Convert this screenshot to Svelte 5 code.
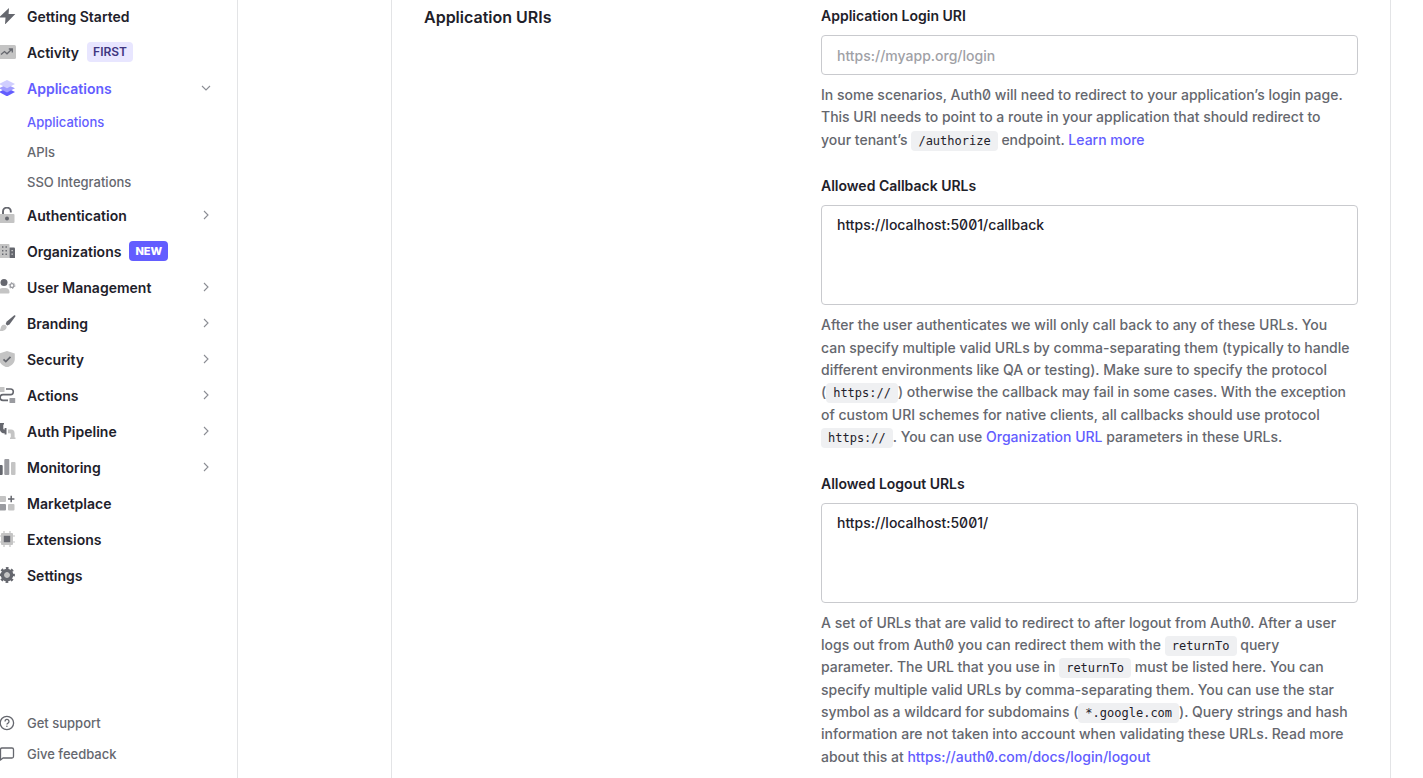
<script>
  const items = [
    { name: 'Getting Started', icon: 'bolt' },
    { name: 'Activity', icon: 'activity', badge: 'FIRST', tone: 'soft' },
    { name: 'Applications', icon: 'stack', open: true, children: ['Applications', 'APIs', 'SSO Integrations'] },
    { name: 'Authentication', icon: 'lock', more: true },
    { name: 'Organizations', icon: 'building', badge: 'NEW', tone: 'solid' },
    { name: 'User Management', icon: 'user', more: true },
    { name: 'Branding', icon: 'brush', more: true },
    { name: 'Security', icon: 'shield', more: true },
    { name: 'Actions', icon: 'flow', more: true },
    { name: 'Auth Pipeline', icon: 'pipe', more: true },
    { name: 'Monitoring', icon: 'bars', more: true },
    { name: 'Marketplace', icon: 'market' },
    { name: 'Extensions', icon: 'chip' },
    { name: 'Settings', icon: 'gear' }
  ];
  let loginUri = $state('');
  let callbacks = $state('https://localhost:5001/callback');
  let logouts = $state('https://localhost:5001/');
</script>

{#snippet glyph(name)}
  <svg class="icon" viewBox="0 0 16 16" width="16" height="16" aria-hidden="true">
    {#if name === 'bolt'}
      <path fill="#65676e" d="M9 0 -1 9.500H5.500L5 16.500 15.300 6H8.600Z" />
    {:else if name === 'activity'}
      <rect x="-3" y="1" width="19" height="14" rx="1.500" fill="#c4c4c4" />
      <path d="M1 10.500 4.500 7.500 7 9.800 11.500 5.500M8.800 5H12.300V8.500" fill="none" stroke="#65676e" stroke-width="1.300" />
    {:else if name === 'stack'}
      <path fill="#635dff" d="M-1 12 7 8l8 4-8 4.300Z" />
      <path fill="#a19dff" d="M-1 8.300 7 4.500l8 3.800-8 4.200Z" />
      <path fill="#d0ceff" d="M-1 4 7 0l8 4-8 4.200Z" />
    {:else if name === 'lock'}
      <rect x="-1" y="7" width="15.500" height="9" rx="1" fill="#c4c4c4" />
      <path d="M3 7V4.500a3.900 3.900 0 0 1 7.800 0V5.500" fill="none" stroke="#65676e" stroke-width="1.900" />
      <circle cx="7" cy="11.500" r="2" fill="#65676e" />
    {:else if name === 'building'}
      <rect x="-1" y="1" width="10.500" height="14" rx="1" fill="#c4c4c4" />
      <path d="M9.500 4.500H14a1 1 0 0 1 1 1V15H9.500Z" fill="#65676e" />
      <path d="M2 3.300h1.400v1.400H2zM5.500 3.300h1.400v1.400H5.500zM2 7h1.400v1.400H2zM5.500 7h1.400v1.400H5.500zM2 10.500h1.400v1.400H2zM5.500 10.500h1.400v1.400H5.500z" fill="#65676e" />
      <path d="M11.500 7h1.300v1.300h-1.300zM11.500 10.500h1.300v1.300h-1.300z" fill="#d8d8d8" />
    {:else if name === 'user'}
      <circle cx="4" cy="3.500" r="3.500" fill="#65676e" />
      <path d="M-2 14.500v-1a4.500 4.500 0 0 1 4.500-4.500h3A4 4 0 0 1 9.500 13.500a1 1 0 0 1-1 1Z" fill="#c4c4c4" />
      <circle cx="12" cy="6.500" r="1.900" fill="none" stroke="#9a9ba0" stroke-width="1.300" />
      <circle cx="12" cy="6.500" r="2.900" fill="none" stroke="#9a9ba0" stroke-width="1" stroke-dasharray="1.400 1.630" />
    {:else if name === 'brush'}
      <path d="M14.300.3c.8-.4 1.400.1 1 1.100L9.500 9.600 7.300 10.500 5.700 9 6.500 6.800Z" fill="#65676e" />
      <path d="M3.500 9.800c2.100-.5 3.700 1.200 3 3.200C5.500 15.700 2 16.600-1 16c1.700-1.300 1.400-2.300 2-3.900.4-1.200 1.300-2.100 2.500-2.300Z" fill="#c4c4c4" />
    {:else if name === 'shield'}
      <path d="M7 0 14.800 2.600V8c0 4-3.400 6.900-7.800 8.500C2.600 14.900-.8 12-.8 8V2.600Z" fill="#c4c4c4" />
      <path d="m3.500 8.300 2.300 2.300 4.700-4.800" fill="none" stroke="#65676e" stroke-width="1.700" />
    {:else if name === 'flow'}
      <rect x="-1" y="0" width="5.500" height="5" rx=".5" fill="#c4c4c4" />
      <rect x="9.500" y="11" width="5.700" height="5" rx=".5" fill="#9a9ba0" />
      <path d="M6 2h4.500a2.800 2.800 0 0 1 0 5.600H3a2.800 2.800 0 0 0 0 5.800h5" fill="none" stroke="#65676e" stroke-width="1.600" />
    {:else if name === 'pipe'}
      <path d="M-1 0H4V1.500H3.300V5c0 1 .4 1.500 1.300 1.500V5H6.500V11.500H4.600V10.300C1.500 10.300-.2 8.500-.2 5.500V1.500H-1Z" fill="#65676e" />
      <path d="M8 6.500h3c2.500 0 3.600 1.600 3.600 4v4h.9V16H10v-1.500h.8v-3c0-.8-.3-1.200-1.100-1.200H8Z" fill="#c4c4c4" />
    {:else if name === 'bars'}
      <rect x="-2" y="6" width="4.700" height="10" rx="1" fill="#65676e" />
      <rect x="4.300" y="0" width="5" height="16" rx="1" fill="#9a9ba0" />
      <rect x="11" y="3" width="4.500" height="13" rx="1" fill="#c4c4c4" />
    {:else if name === 'market'}
      <rect x="-1" y="1" width="7" height="6" rx="1" fill="#c4c4c4" />
      <rect x="-1" y="9" width="7" height="6.500" rx="1" fill="#9a9ba0" />
      <rect x="8" y="9" width="6.500" height="6.500" rx="1" fill="#c4c4c4" />
      <path d="M11.200.8v6.400M8 4h6.400" stroke="#65676e" stroke-width="1.500" />
    {:else if name === 'chip'}
      <path d="M4 0V16M10 0V16M-1 5H15M-1 11H15" stroke="#c4c4c4" stroke-width="1.200" />
      <rect x="1" y="2" width="12" height="12" rx="1" fill="#c4c4c4" />
      <rect x="3.800" y="4.800" width="6.400" height="6.400" fill="#65676e" />
    {:else if name === 'gear'}
      <circle cx="7" cy="8" r="4.400" fill="none" stroke="#65676e" stroke-width="3.800" />
      <circle cx="7" cy="8" r="6.800" fill="none" stroke="#65676e" stroke-width="2.200" stroke-dasharray="2.700 2.640" stroke-dashoffset="1.350" />
      <circle cx="7" cy="8" r="2.700" fill="#c4c4c4" />
    {:else if name === 'help'}
      <circle cx="6.900" cy="8" r="6.700" fill="none" stroke="#65676e" stroke-width="1.300" />
      <path d="M5 6.400a2 2 0 1 1 3 1.700c-.8.400-1.100.8-1.100 1.500" fill="none" stroke="#65676e" stroke-width="1.300" />
      <circle cx="6.900" cy="11.300" r=".8" fill="#65676e" />
    {:else if name === 'chat'}
      <path d="M.5 14V3.500A1.500 1.500 0 0 1 2 2h10a1.500 1.500 0 0 1 1.500 1.500v7A1.500 1.500 0 0 1 12 12H3Z" fill="none" stroke="#65676e" stroke-width="1.300" stroke-linejoin="round" />
    {/if}
  </svg>
{/snippet}

<div class="page">
  <aside>
    <nav aria-label="Main">
      {#each items as item}
        <a class="item" class:active={item.open} href="#top">
          {@render glyph(item.icon)}
          <span>{item.name}</span>
          {#if item.badge}<span class="badge {item.tone}">{item.badge}</span>{/if}
          {#if item.more || item.open}
            <svg class="chevron" viewBox="0 0 12 12" width="12" height="12" aria-hidden="true">
              <path d={item.open ? 'M2 4 6 8 10 4' : 'M4 2 8 6 4 10'} fill="none" stroke="#8b8d94" stroke-width="1.100" />
            </svg>
          {/if}
        </a>
        {#if item.children}
          <div class="sub">
            {#each item.children as child, i}
              <a href="#top" class:active={i === 0}>{child}</a>
            {/each}
          </div>
        {/if}
      {/each}
    </nav>
    <div class="help">
      <a href="#top">{@render glyph('help')}<span>Get support</span></a>
      <a href="#top">{@render glyph('chat')}<span>Give feedback</span></a>
    </div>
  </aside>

  <main>
    <section>
      <h2>Application URIs</h2>
      <form>
        <div class="field">
          <label for="login">Application Login URI</label>
          <input id="login" type="text" placeholder="https://myapp.org/login" bind:value={loginUri} />
          <p>In some scenarios, Auth0 will need to redirect to your application’s login page. This URI needs to point to a route in your application that should redirect to your tenant’s <code>/authorize</code> endpoint. <a href="#top">Learn more</a></p>
        </div>
        <div class="field">
          <label for="callbacks">Allowed Callback URLs</label>
          <textarea id="callbacks" spellcheck="false" bind:value={callbacks}></textarea>
          <p>After the user authenticates we will only call back to any of these URLs. You can specify multiple valid URLs by comma-separating them (typically to handle different environments like QA or testing). Make sure to specify the protocol (<code>https://</code>) otherwise the callback may fail in some cases. With the exception of custom URI schemes for native clients, all callbacks should use protocol <code>https://</code>. You can use <a href="#top">Organization URL</a> parameters in these URLs.</p>
        </div>
        <div class="field">
          <label for="logouts">Allowed Logout URLs</label>
          <textarea id="logouts" spellcheck="false" bind:value={logouts}></textarea>
          <p>A set of URLs that are valid to redirect to after logout from Auth0. After a user logs out from Auth0 you can redirect them with the <code>returnTo</code> query parameter. The URL that you use in <code>returnTo</code> must be listed here. You can specify multiple valid URLs by comma-separating them. You can use the star symbol as a wildcard for subdomains (<code>*.google.com</code>). Query strings and hash information are not taken into account when validating these URLs. Read more about this at <a href="#top">https://auth0.com/docs/login/logout</a></p>
        </div>
      </form>
    </section>
  </main>
</div>

<style>
  :global(body) {
    background: #fff;
  }
  .page {
    display: flex;
    min-height: 100vh;
    box-sizing: border-box;
    font-family: Inter, sans-serif;
    font-size: 14px;
    font-weight: 500;
    font-feature-settings: 'zero';
    color: #1e212a;
  }
  a {
    color: #635dff;
    text-decoration: none;
  }
  aside {
    display: flex;
    flex-direction: column;
    flex: 0 0 238px;
    box-sizing: border-box;
    border-right: 1px solid #e3e4e6;
    padding-bottom: 9px;
  }
  .item {
    display: flex;
    align-items: center;
    height: 36px;
    padding-right: 25px;
    color: #1e212a;
    font-weight: 600;
  }
  .item:first-child {
    height: 32px;
    margin-bottom: 2px;
  }
  .icon {
    flex: none;
    margin-right: 11px;
  }
  .chevron {
    margin-left: auto;
  }
  .badge {
    margin-left: 8px;
    padding: 0 6px;
    border-radius: 4px;
    line-height: 20px;
  }
  .soft {
    background: #e8e6ff;
    color: #3f3681;
    font-size: 12px;
    font-weight: 600;
  }
  .solid {
    background: #635dff;
    color: #fff;
    font-size: 11px;
    font-weight: 800;
  }
  .sub {
    display: flex;
    flex-direction: column;
    padding: 1px 0 0 27px;
  }
  .sub a,
  .help a {
    display: flex;
    align-items: center;
    height: 30px;
    font-size: 13px;
    color: #65676e;
  }
  .item.active,
  .sub a.active {
    color: #635dff;
  }
  .help {
    display: flex;
    flex-direction: column;
    gap: 1px;
    margin-top: auto;
  }
  main {
    flex: 1;
    min-width: 0;
    padding: 0 32px 0 153px;
  }
  section {
    display: grid;
    grid-template-columns: 333fr 537fr;
    gap: 64px;
    box-sizing: border-box;
    height: 100%;
    padding: 5px 32px 0;
    border: solid #e3e4e6;
    border-width: 0 1px;
  }
  h2 {
    margin: 0;
    font-size: 16px;
    line-height: 24px;
    font-weight: 600;
  }
  form,
  .field {
    display: flex;
    flex-direction: column;
  }
  form {
    gap: 24px;
  }
  label {
    margin-bottom: 8px;
    line-height: 22px;
    font-weight: 600;
  }
  input,
  textarea {
    box-sizing: border-box;
    width: 100%;
    border: 1px solid #c9cace;
    border-radius: 4px;
    padding: 8px 15px;
    background: #fff;
    color: #1e212a;
    font: inherit;
    font-feature-settings: inherit;
    line-height: 22px;
    resize: none;
  }
  input {
    height: 40px;
  }
  textarea {
    height: 100px;
  }
  ::placeholder {
    color: #a0a1a6;
    opacity: 1;
  }
  p {
    margin: 9px 0 0;
    padding-right: 4px;
    line-height: 1.6;
    color: #65676e;
  }
  code {
    padding: 3px 7px;
    border-radius: 4px;
    background: #eff0f2;
    color: #1e212a;
    font-family: 'DejaVu Sans Mono', monospace;
    font-size: 12px;
    font-weight: 400;
  }
</style>
